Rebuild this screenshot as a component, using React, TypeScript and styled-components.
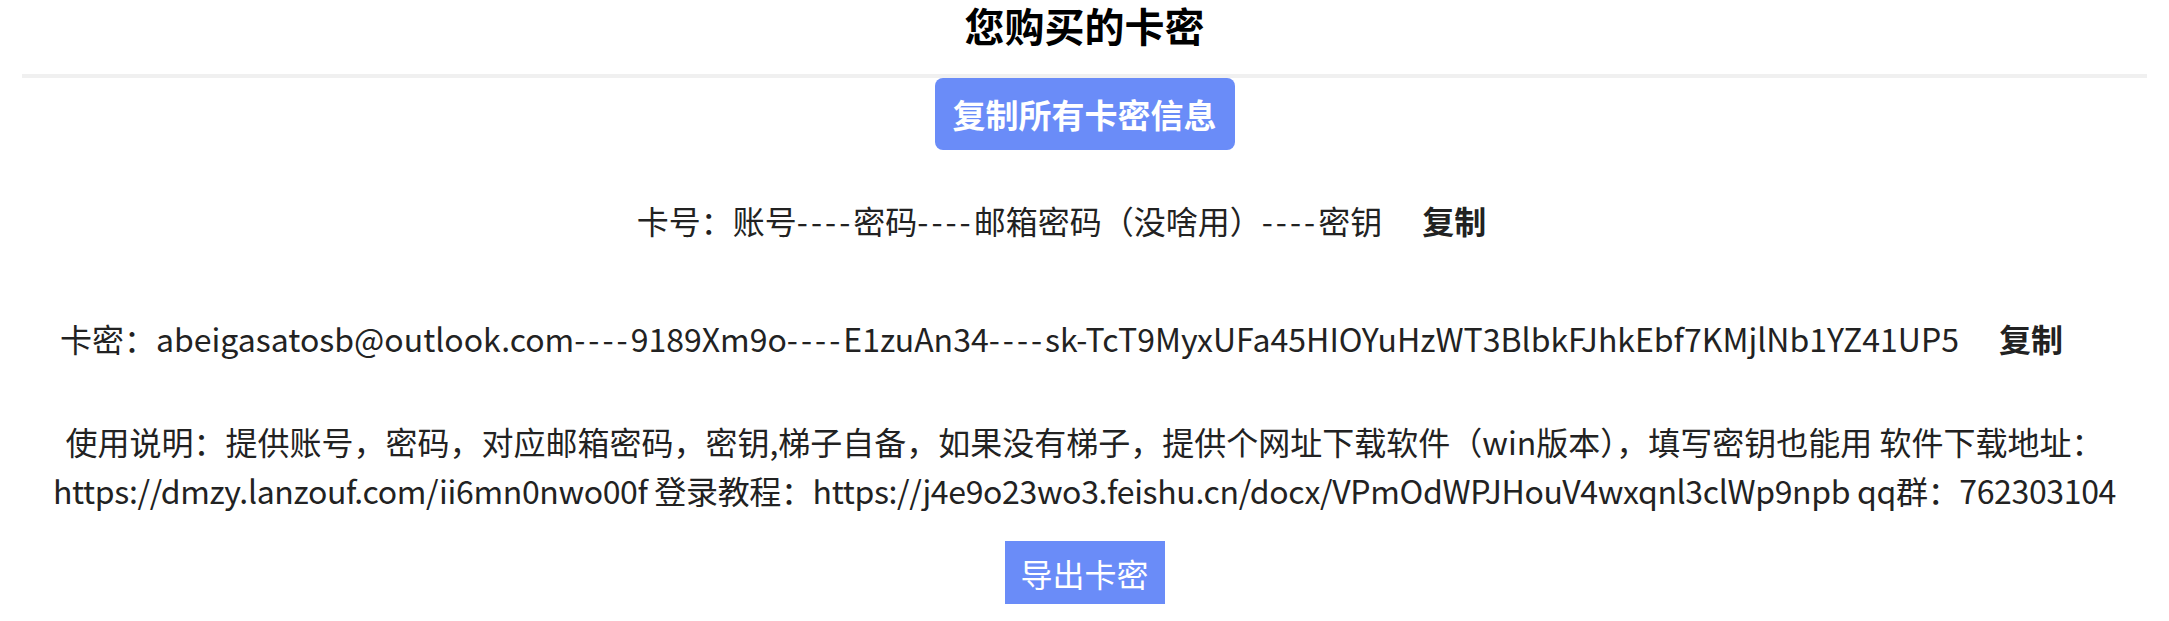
import React from "react";
import styled, { createGlobalStyle } from "styled-components";

const GlobalStyle = createGlobalStyle`
  html, body {
    margin: 0;
    padding: 0;
    background: #ffffff;
  }
  body {
    font-family: "Noto Sans CJK SC", "Noto Sans", sans-serif;
    color: #222;
  }
`;

const Page = styled.div`
  padding: 0 22px;
  text-align: center;
`;

const Header = styled.h2`
  margin: 0;
  padding-top: 2px;
  font-size: 40px;
  font-weight: 700;
  line-height: 46px;
  color: #000;
  padding-bottom: 26px;
  border-bottom: 4px solid #f0f0f0;
`;

const CopyAllButton = styled.button`
  display: block;
  margin: 0 auto;
  width: 300px;
  height: 72px;
  border: none;
  border-radius: 8px;
  background: #6a8cf8;
  color: #fff;
  font-family: inherit;
  font-size: 33px;
  font-weight: 700;
  padding: 0;
  cursor: pointer;
`;

const Row = styled.div<{ $top: number }>`
  margin-top: ${(p) => p.$top}px;
  font-size: 32px;
  line-height: 49px;
  color: #222;
`;

const Sep = styled.span`
  letter-spacing: 3px;
`;

const Tight = styled.span`
  letter-spacing: -0.35px;
`;

const CopyLink = styled.span`
  display: inline-block;
  font-weight: 700;
  margin-left: 18px;
  padding: 0 46px 0 22px;
  cursor: pointer;
`;

const ExportButton = styled.button`
  display: block;
  margin: 26px auto 0;
  width: 160px;
  height: 63px;
  border: none;
  border-radius: 0;
  background: #6a8cf8;
  color: #fff;
  font-family: inherit;
  font-size: 32px;
  padding: 0;
  cursor: pointer;
`;

const D = () => <Sep>----</Sep>;

export default function App() {
  return (
    <>
      <GlobalStyle />
      <Page>
        <Header>您购买的卡密</Header>
        <CopyAllButton>复制所有卡密信息</CopyAllButton>
        <Row $top={46}>
          卡号：账号<D />密码<D />邮箱密码（没啥用）<D />密钥
          <CopyLink>复制</CopyLink>
        </Row>
        <Row $top={69}>
          卡密：abeigasatosb@outlook.com<D />9189Xm9o<D />E1zuAn34<D />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
          <CopyLink>复制</CopyLink>
        </Row>
        <Row $top={54}>
          使用说明：提供账号，密码，对应邮箱密码，密钥,梯子自备，如果没有梯子，提供个网址下载软件（win版本），填写密钥也能用 软件下载地址：
          <br />
          <Tight>
            https://dmzy.lanzouf.com/ii6mn0nwo00f 登录教程：https://j4e9o23wo3.feishu.cn/docx/VPmOdWPJHouV4wxqnl3clWp9npb qq群：762303104
          </Tight>
        </Row>
        <ExportButton>导出卡密</ExportButton>
      </Page>
    </>
  );
}
